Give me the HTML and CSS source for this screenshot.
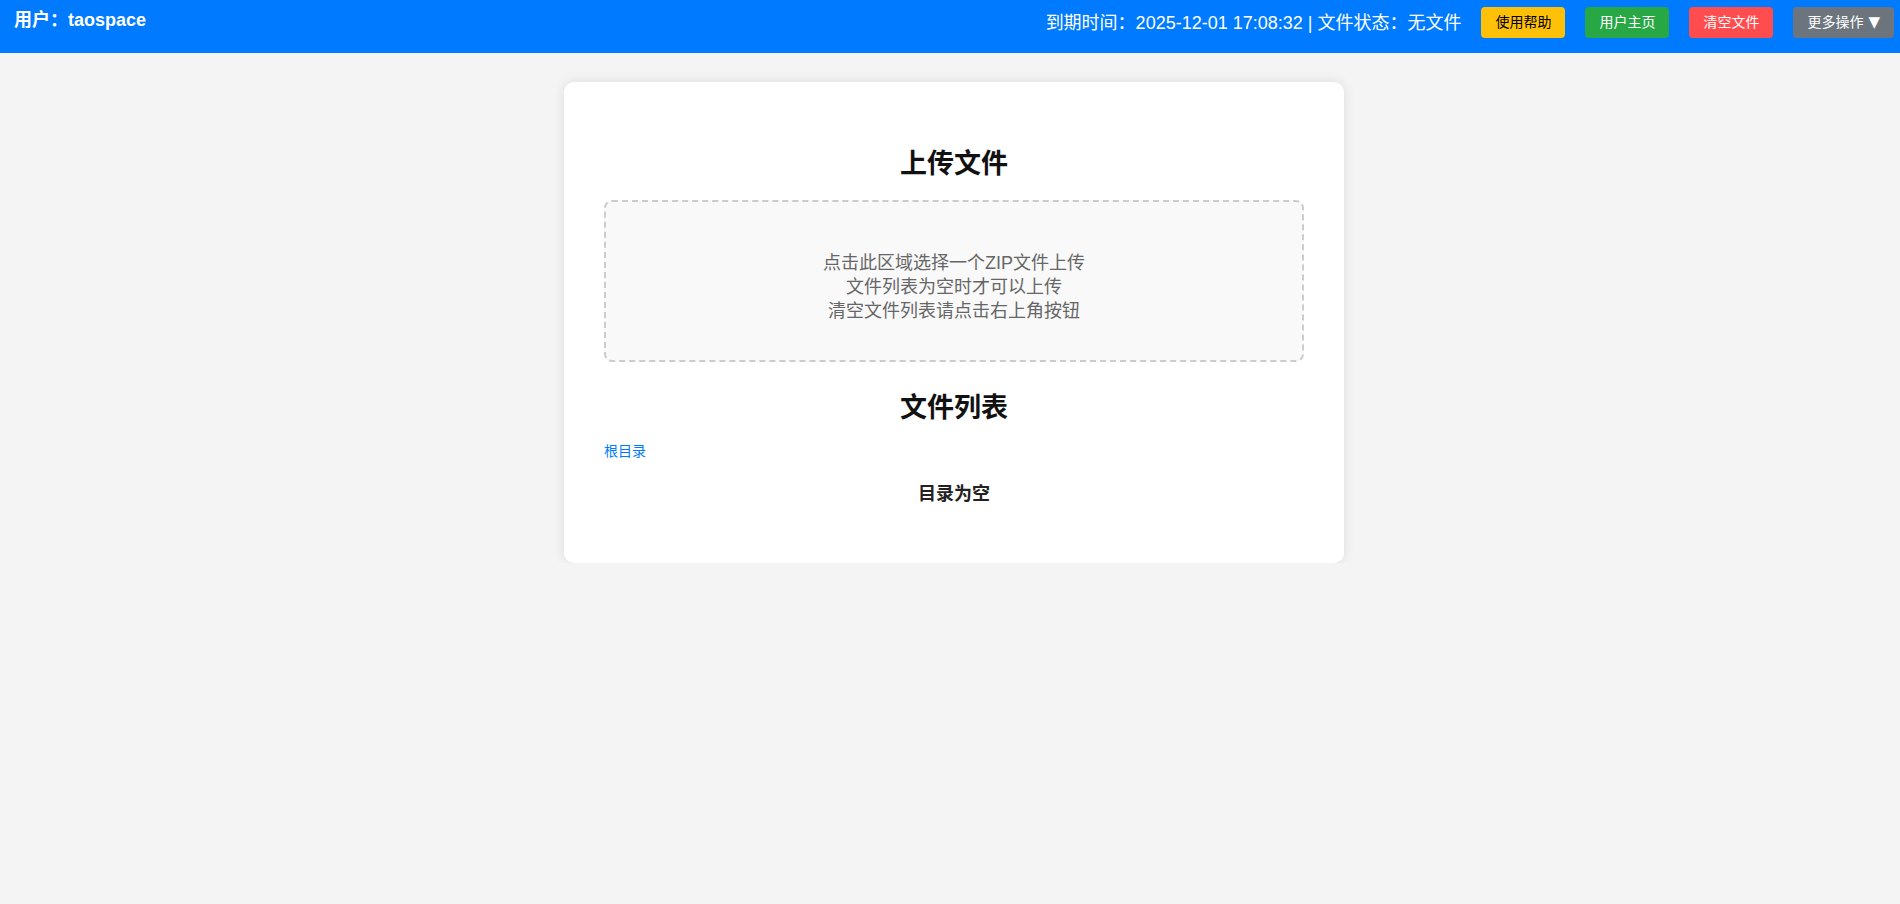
FILE: index.html
```html
<!DOCTYPE html>
<html lang="zh-CN">
<head>
    <meta charset="UTF-8">
    <meta name="viewport" content="width=device-width, initial-scale=1.0">
    <title>文件管理</title>
    <link rel="stylesheet" href="styles.css">
</head>
<body>

    <div class="header">
        <div class="user">用户：taospace</div>
        <div class="header-right">
            <span class="status">到期时间：2025-12-01 17:08:32 | 文件状态：无文件</span>
            <button class="btn btn-help">使用帮助</button>
            <button class="btn btn-home">用户主页</button>
            <button class="btn btn-clear">清空文件</button>
            <button class="btn btn-more">更多操作<span class="caret">▼</span></button>
        </div>
    </div>

    <div class="container">
        <h2>上传文件</h2>
        <div class="upload-area" id="upload-area">
            点击此区域选择一个ZIP文件上传<br>
            文件列表为空时才可以上传<br>
            清空文件列表请点击右上角按钮
        </div>
        <input type="file" id="file-input" accept=".zip" class="hidden">

        <h2 class="list-title">文件列表</h2>
        <div class="breadcrumb">
            <a href="#">根目录</a>
        </div>
        <div class="empty">目录为空</div>
    </div>

    <script>
        const uploadArea = document.getElementById('upload-area');
        const fileInput = document.getElementById('file-input');

        uploadArea.addEventListener('click', () => {
            fileInput.click();
        });
    </script>

</body>
</html>
```

FILE: styles.css
```css
body {
    margin: 0;
    font-family: "Liberation Sans", "Noto Sans CJK SC", sans-serif;
    background-color: #f4f4f4;
    color: #222;
}
.header {
    height: 53px;
    box-sizing: border-box;
    padding: 7px 6px 0 14px;
    background-color: #007bff;
    color: #fff;
    display: flex;
    justify-content: space-between;
    align-items: flex-start;
}
.user {
    font-size: 18px;
    font-weight: bold;
    line-height: 26px;
}
.header-right {
    display: flex;
    align-items: center;
    gap: 20px;
}
.status {
    font-size: 18px;
    line-height: 26px;
}
.btn {
    border: none;
    border-radius: 4px;
    padding: 6px 14px;
    font-family: inherit;
    font-size: 14px;
    line-height: 19px;
    color: #fff;
    cursor: pointer;
}
.btn-help {
    background-color: #ffc107;
    color: #000;
}
.btn-home {
    background-color: #28a745;
}
.btn-clear {
    background-color: #ff4d4f;
}
.btn-more {
    background-color: #6c757d;
}
.caret {
    margin-left: 5px;
    font-family: "DejaVu Sans", sans-serif;
    font-size: 15px;
}
.container {
    width: 780px;
    box-sizing: border-box;
    margin: 29px auto 0 calc(50% - 386px);
    padding: 40px;
    background-color: #fff;
    border-radius: 10px;
    box-shadow: 0 0 12px rgba(0, 0, 0, 0.1);
}
h2 {
    font-size: 27px;
    line-height: 36px;
    text-align: center;
    color: #111;
    margin: 24px 0 18px;
}
.upload-area {
    border: 2px dashed #ccc;
    border-radius: 8px;
    background-color: #f9f9f9;
    padding: 49px 20px 37px;
    text-align: center;
    color: #666;
    font-size: 18px;
    line-height: 24px;
    cursor: pointer;
}
.hidden {
    display: none;
}
h2.list-title {
    margin: 28px 0 15px;
}
.breadcrumb {
    font-size: 14px;
    line-height: 20px;
}
.breadcrumb a {
    color: #007bff;
    text-decoration: none;
}
.empty {
    text-align: center;
    font-size: 18px;
    font-weight: bold;
    line-height: 25px;
    margin: 21px 0 16px;
}
```
